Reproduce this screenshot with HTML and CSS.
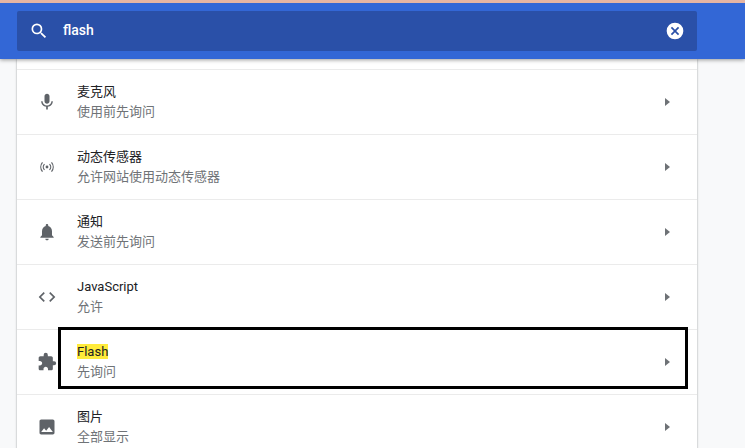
FILE: index.html
```html
<!DOCTYPE html>
<html lang="zh-CN">
<head>
    <meta charset="UTF-8">
    <meta name="viewport" content="width=device-width, initial-scale=1.0">
    <title>网站设置</title>
    <link rel="stylesheet" href="styles.css">
</head>
<body>
    <header class="toolbar">
        <div class="search">
            <svg class="search-icon" viewBox="0 0 24 24"><path d="M15.5 14h-.79l-.28-.27A6.47 6.47 0 0 0 16 9.5 6.5 6.5 0 1 0 9.5 16c1.61 0 3.09-.59 4.23-1.57l.27.28v.79l5 4.99L20.49 19l-4.99-5zm-6 0C7.01 14 5 11.99 5 9.5S7.01 5 9.5 5 14 7.01 14 9.5 11.99 14 9.5 14z"/></svg>
            <span class="search-text">flash</span>
            <svg class="clear-icon" viewBox="0 0 24 24"><path d="M12 2a10 10 0 1 0 0 20 10 10 0 0 0 0-20zm5 13.59L15.59 17 12 13.41 8.41 17 7 15.59 10.59 12 7 8.41 8.41 7 12 10.59 15.59 7 17 8.41 13.41 12 17 15.59z"/></svg>
        </div>
    </header>

    <div class="card">
        <div class="row">
            <svg class="row-icon" viewBox="0 0 24 24"><path d="M12 14c1.66 0 3-1.34 3-3V5c0-1.66-1.34-3-3-3S9 3.340 9 5v6c0 1.66 1.34 3 3 3zm5.3-3c0 3-2.540 5.100-5.300 5.100S6.700 14 6.700 11H5c0 3.410 2.720 6.230 6 6.720V21h2v-3.280c3.280-.48 6-3.300 6-6.720h-1.700z"/></svg>
            <div class="row-text">
                <div class="row-title">麦克风</div>
                <div class="row-sub">使用前先询问</div>
            </div>
            <span class="arrow"></span>
        </div>
        <div class="row">
            <svg class="row-icon" viewBox="0 0 24 24"><circle cx="12" cy="12" r="1.700"/><path d="M9 8.500A5 5 0 0 0 9 15.500M15 8.500A5 5 0 0 1 15 15.500M6.600 6.500A8.500 8.500 0 0 0 6.600 17.500M17.400 6.500A8.500 8.500 0 0 1 17.400 17.500" fill="none" stroke="#5f6368" stroke-width="1.500"/></svg>
            <div class="row-text">
                <div class="row-title">动态传感器</div>
                <div class="row-sub">允许网站使用动态传感器</div>
            </div>
            <span class="arrow"></span>
        </div>
        <div class="row">
            <svg class="row-icon" viewBox="0 0 24 24"><path d="M12 22c1.100 0 2-.9 2-2h-4c0 1.100.9 2 2 2zm6-6v-5c0-3.070-1.630-5.640-4.500-6.320V4c0-.83-.67-1.500-1.500-1.500s-1.500.67-1.500 1.500v.68C7.640 5.360 6 7.920 6 11v5l-2 2v1h16v-1l-2-2z"/></svg>
            <div class="row-text">
                <div class="row-title">通知</div>
                <div class="row-sub">发送前先询问</div>
            </div>
            <span class="arrow"></span>
        </div>
        <div class="row">
            <svg class="row-icon" viewBox="0 0 24 24"><path d="M9.400 16.600 4.800 12l4.600-4.600L8 6l-6 6 6 6 1.400-1.400zm5.200 0 4.600-4.600-4.600-4.600L16 6l6 6-6 6-1.400-1.400z"/></svg>
            <div class="row-text">
                <div class="row-title">JavaScript</div>
                <div class="row-sub">允许</div>
            </div>
            <span class="arrow"></span>
        </div>
        <div class="row">
            <svg class="row-icon" viewBox="0 0 24 24"><path d="M20.500 11H19V7c0-1.100-.9-2-2-2h-4V3.500a2.500 2.500 0 0 0-5 0V5H4c-1.100 0-1.990.9-1.990 2v3.800H3.500c1.490 0 2.700 1.210 2.700 2.700s-1.210 2.700-2.700 2.700H2V20c0 1.100.9 2 2 2h3.800v-1.500c0-1.490 1.210-2.700 2.700-2.700s2.700 1.210 2.700 2.700V22H17c1.100 0 2-.9 2-2v-4h1.500a2.500 2.500 0 0 0 0-5z"/></svg>
            <div class="row-text">
                <div class="row-title"><mark class="hit">Flash</mark></div>
                <div class="row-sub">先询问</div>
            </div>
            <span class="arrow"></span>
        </div>
        <div class="row">
            <svg class="row-icon" viewBox="0 0 24 24"><path d="M21 19V5c0-1.100-.9-2-2-2H5c-1.100 0-2 .9-2 2v14c0 1.100.9 2 2 2h14c1.100 0 2-.9 2-2zM8.500 13.500l2.500 3.010L14.500 12l4.500 6H5l3.500-4.500z"/></svg>
            <div class="row-text">
                <div class="row-title">图片</div>
                <div class="row-sub">全部显示</div>
            </div>
            <span class="arrow"></span>
        </div>
    </div>

    <div class="callout"></div>
</body>
</html>
```

FILE: styles.css
```css
* {
    margin: 0;
    padding: 0;
    box-sizing: border-box;
    font-family: Roboto, 'Noto Sans CJK SC', sans-serif;
}

html, body {
    height: 100%;
    overflow: hidden;
}

body {
    position: relative;
    background: #f8f9fa;
    border-top: 3px solid #e6b5a3;
}

.toolbar {
    position: relative;
    z-index: 1;
    height: 56px;
    padding: 8px 48px 0 17px;
    background: #3367d6;
    box-shadow: 0 1px 4px rgba(0, 0, 0, 0.4);
}

.search {
    display: flex;
    align-items: center;
    width: 680px;
    height: 40px;
    padding: 0 12px;
    background: #2a50a8;
    border-radius: 2px;
    color: #ffffff;
}

.search-icon {
    width: 20px;
    height: 20px;
    fill: #ffffff;
}

.search-text {
    flex: 1;
    margin-left: 14px;
    padding-bottom: 2px;
    font-size: 14px;
    font-weight: 500;
    color: #ffffff;
}

.clear-icon {
    width: 20px;
    height: 20px;
    fill: #ffffff;
}

.card {
    width: 680px;
    margin-left: 17px;
    padding-top: 10px;
    background: #ffffff;
    box-shadow: 0 0 2px rgba(60, 64, 67, 0.5);
}

.row {
    display: flex;
    align-items: center;
    height: 65px;
    padding: 0 27px 0 20px;
    border-top: 1px solid #ebebeb;
}

.row-icon {
    flex: none;
    width: 20px;
    height: 20px;
    fill: #5f6368;
}

.row-text {
    flex: 1;
    margin-left: 20px;
}

.row-title {
    height: 20px;
    font-size: 13px;
    line-height: 18px;
    color: #202124;
}

.row-sub {
    font-size: 13px;
    line-height: 18px;
    color: #6f7377;
}

.hit {
    display: inline-block;
    line-height: 15px;
    background: #ffeb3b;
    color: #202124;
}

.arrow {
    width: 0;
    height: 0;
    border-top: 4px solid transparent;
    border-bottom: 4px solid transparent;
    border-left: 5px solid #6e7276;
}

.callout {
    position: absolute;
    left: 58px;
    top: 324px;
    width: 630px;
    height: 62px;
    border: 3px solid #000000;
}
```
